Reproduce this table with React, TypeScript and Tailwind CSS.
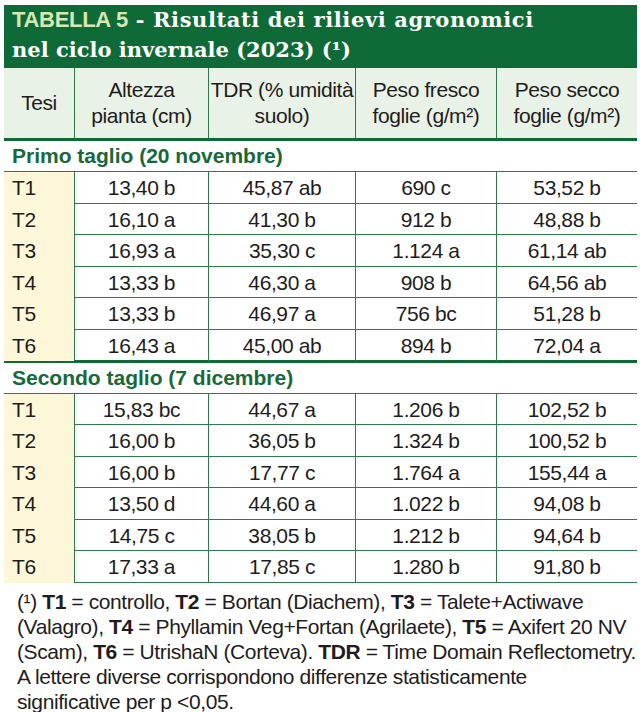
const COLS = 'grid grid-cols-[71px_134px_147px_141px_140px]'

const SECTIONS = [
  {
    title: 'Primo taglio (20 novembre)',
    rows: [
      ['T1', '13,40 b', '45,87 ab', '690 c', '53,52 b'],
      ['T2', '16,10 a', '41,30 b', '912 b', '48,88 b'],
      ['T3', '16,93 a', '35,30 c', '1.124 a', '61,14 ab'],
      ['T4', '13,33 b', '46,30 a', '908 b', '64,56 ab'],
      ['T5', '13,33 b', '46,97 a', '756 bc', '51,28 b'],
      ['T6', '16,43 a', '45,00 ab', '894 b', '72,04 a'],
    ],
    thickEnd: true,
  },
  {
    title: 'Secondo taglio (7 dicembre)',
    rows: [
      ['T1', '15,83 bc', '44,67 a', '1.206 b', '102,52 b'],
      ['T2', '16,00 b', '36,05 b', '1.324 b', '100,52 b'],
      ['T3', '16,00 b', '17,77 c', '1.764 a', '155,44 a'],
      ['T4', '13,50 d', '44,60 a', '1.022 b', '94,08 b'],
      ['T5', '14,75 c', '38,05 b', '1.212 b', '94,64 b'],
      ['T6', '17,33 a', '17,85 c', '1.280 b', '91,80 b'],
    ],
    thickEnd: false,
  },
]

function HeaderCell({ children, last }: { children: React.ReactNode; last?: boolean }) {
  return (
    <div
      className={
        'flex items-center justify-center text-center leading-[26px] ' +
        (last ? '' : 'border-r border-[#2b7a47]')
      }
    >
      {children}
    </div>
  )
}

export default function App() {
  return (
    <div
      className="w-[640px] h-[712px] bg-white overflow-hidden pt-[5px] pl-[4px] text-[#1f1c1d]"
      style={{ fontFamily: '"Liberation Sans", Arial, sans-serif' }}
    >
      {/* title bar */}
      <div className="w-[633px] h-[63px] bg-[#0e6a37] px-[8px] pt-[1px] leading-[28px] text-white">
        <div className="whitespace-nowrap">
          <span className="font-bold text-[22px] tracking-[-0.3px] text-[#d5e7b3]">TABELLA 5</span>
          <span className="font-bold text-[21px] tracking-[0.6px] font-['DejaVu_Serif',serif]"> - Risultati dei rilievi agronomici</span>
        </div>
        <div className="whitespace-nowrap font-bold text-[21px] font-['DejaVu_Serif',serif]">
          nel ciclo invernale (2023) (¹)
        </div>
      </div>

      <div className="w-[633px] text-[21px] tracking-[-0.4px]">
        {/* column headers */}
        <div className={COLS + ' h-[73px] bg-[#e9f2e6] border-b-[3px] border-[#0e6a37]'}>
          <HeaderCell>Tesi</HeaderCell>
          <HeaderCell>Altezza<br />pianta (cm)</HeaderCell>
          <HeaderCell>TDR (% umidità<br />suolo)</HeaderCell>
          <HeaderCell>Peso fresco<br />foglie (g/m²)</HeaderCell>
          <HeaderCell last>Peso secco<br />foglie (g/m²)</HeaderCell>
        </div>

        {SECTIONS.map((s) => (
          <div key={s.title}>
            <div className="h-[31px] flex items-center pl-[8px] border-b border-[#2b7a47] font-bold text-[21px] tracking-normal text-[#17693a]">
              {s.title}
            </div>
            {s.rows.map((r, i) => {
              const end = i === s.rows.length - 1
              const thick = end && s.thickEnd
              return (
                <div
                  key={r[0]}
                  className={
                    COLS +
                    (thick ? ' h-[33px] border-b-[3px] border-[#0e6a37]' : ' h-[31.5px] border-b border-[#2b7a47]')
                  }
                >
                  <div className="flex items-center pl-[8px] bg-[#fdf7da] border-r border-[#2b7a47]">{r[0]}</div>
                  {r.slice(1).map((v, j) => (
                    <div
                      key={j}
                      className={
                        'flex items-center justify-center ' + (j < 3 ? 'border-r border-[#2b7a47]' : '')
                      }
                    >
                      {v}
                    </div>
                  ))}
                </div>
              )
            })}
          </div>
        ))}

        {/* footnote */}
        <p className="pt-[6px] pl-[13px] leading-[25px] whitespace-nowrap">
          (¹) <b>T1</b> = controllo, <b>T2</b> = Bortan (Diachem), <b>T3</b> = Talete+Actiwave
          <br />
          (Valagro), <b>T4</b> = Phyllamin Veg+Fortan (Agrilaete), <b>T5</b> = Axifert 20 NV
          <br />
          (Scam), <b>T6</b> = UtrishaN (Corteva). <b>TDR</b> = Time Domain Reflectometry.
          <br />
          A lettere diverse corrispondono differenze statisticamente
          <br />
          significative per p &lt;0,05.
        </p>
      </div>
    </div>
  )
}
